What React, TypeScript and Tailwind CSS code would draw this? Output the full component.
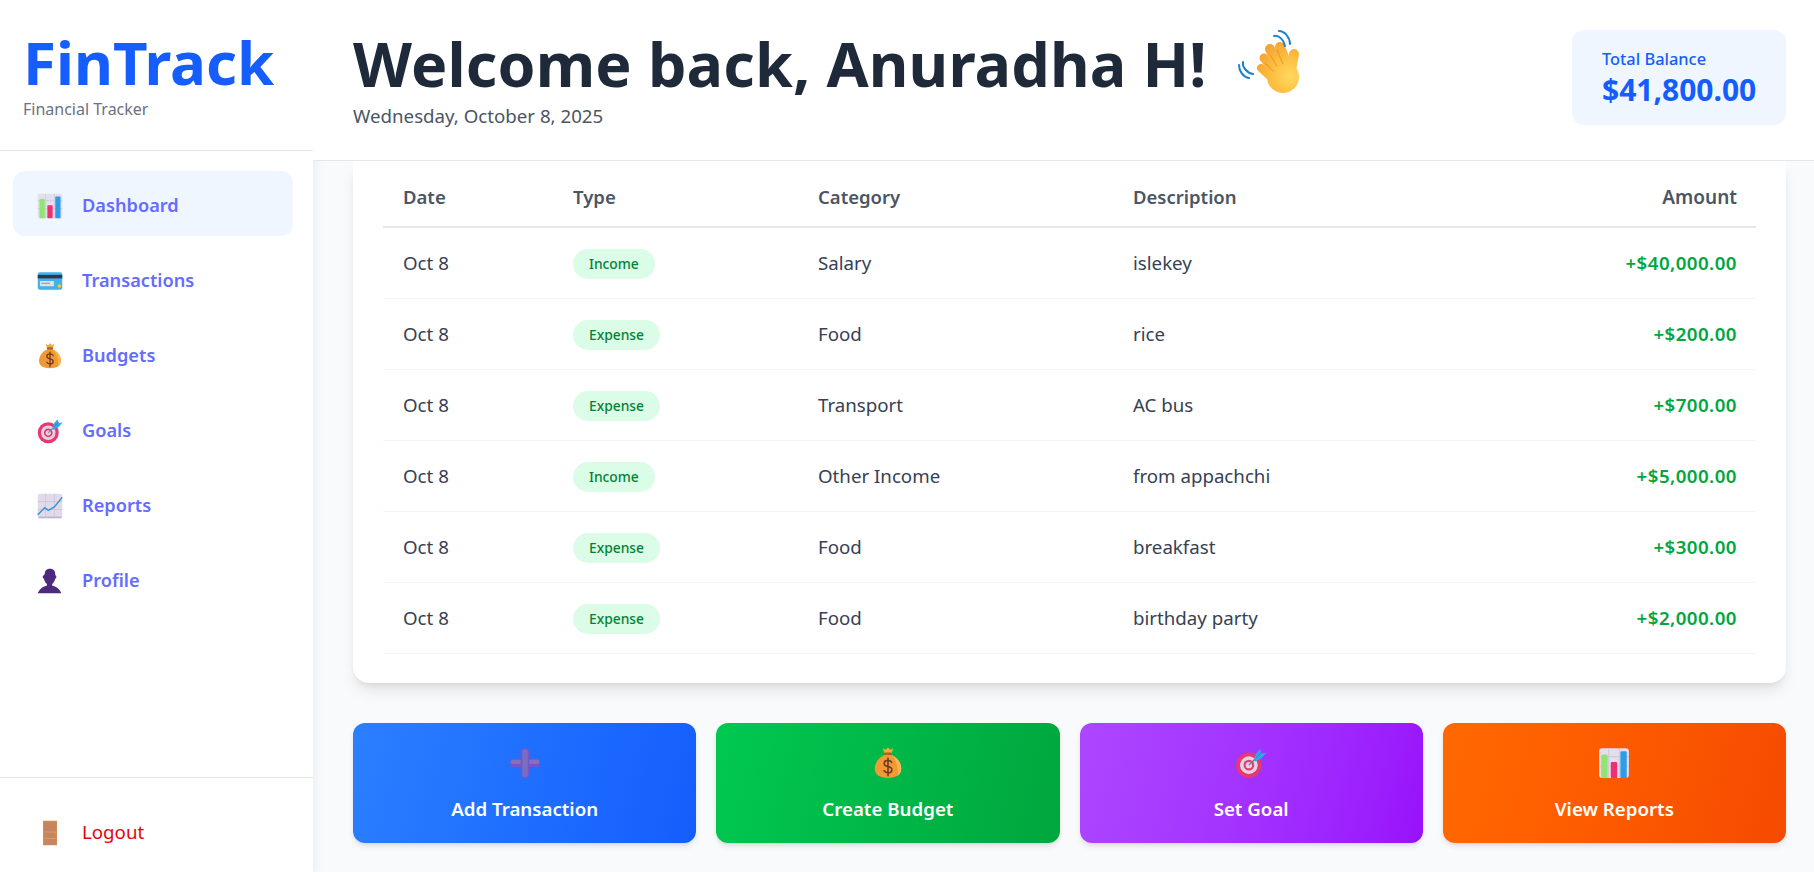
import type { ReactNode } from 'react'

function BarChartIcon({ size = 28 }: { size?: number }) {
  return (
    <svg width={size} height={size} viewBox="0 0 32 32">
      <rect x="2" y="2" width="28" height="28" rx="3" fill="#e4dfec" />
      <path d="M2 10h28M2 19h28M11 2v28M21 2v28" stroke="#d0c9da" strokeWidth="1" />
      <path d="M4 9.500a1.500 1.500 0 0 1 1.500-1.500h3a1.500 1.500 0 0 1 1.500 1.500V30H5a1 1 0 0 1-1-1z" fill="#8fe56f" />
      <rect x="13" y="15" width="6" height="15" rx="0.8" fill="#ee2f70" />
      <path d="M22 6a1 1 0 0 1 1-1h4a1 1 0 0 1 1 1v24h-6z" fill="#2e9ce9" />
    </svg>
  )
}

function CardIcon({ size = 28 }: { size?: number }) {
  return (
    <svg width={size} height={size} viewBox="0 0 32 32">
      <rect x="2" y="6" width="28" height="20" rx="2.500" fill="#3fb2e8" />
      <rect x="2" y="9" width="28" height="4" fill="#3a2f55" />
      <rect x="4.500" y="16" width="16" height="6" rx="0.5" fill="#d9e3ea" />
      <rect x="6" y="18" width="10" height="1.200" fill="#8c98a6" />
      <rect x="25" y="20" width="3.500" height="3.500" rx="1" fill="#fcc63c" />
    </svg>
  )
}

function MoneyBagIcon({ size = 28 }: { size?: number }) {
  return (
    <svg width={size} height={size} viewBox="0 0 32 32">
      <path d="M11 2l2.800 1.600L16 1.500l2.200 2.100L21 2l-1.700 5h-6.600z" fill="#f4a93a" />
      <rect x="12.500" y="6" width="7" height="3" rx="1" fill="#a8612a" />
      <path d="M12.500 8.500C7 11 3.500 16 3.500 21.500c0 6 5 8.500 12.500 8.500s12.500-2.500 12.500-8.500c0-5.500-3.500-10.500-9-13z" fill="#f09a35" />
      <path d="M19.500 8.500c5.500 2.500 9 7.500 9 13 0 3-1.300 5-3.500 6.400C26 20 23.500 13 19.500 8.500z" fill="#f9b650" />
      <path d="M19.500 15.500c-.7-1.300-2-2-3.500-2-2.100 0-3.600 1.100-3.600 2.900s1.500 2.500 3.600 2.900 3.600 1.200 3.600 3-1.500 2.900-3.600 2.900c-1.700 0-3-.7-3.700-2M16 11.500v16.500" fill="none" stroke="#6f3a23" strokeWidth="1.500" strokeLinecap="round" />
    </svg>
  )
}

function TargetIcon({ size = 28 }: { size?: number }) {
  return (
    <svg width={size} height={size} viewBox="0 0 32 32">
      <circle cx="14" cy="18" r="12" fill="#e6396f" />
      <circle cx="14" cy="18" r="8.300" fill="#e2d4e4" />
      <circle cx="14" cy="18" r="5" fill="#e6396f" />
      <circle cx="14" cy="18" r="3" fill="#e2d4e4" />
      <path d="M14 18L25 7" stroke="#7b6f86" strokeWidth="1.200" />
      <path d="M18.500 13.500l2-6 4-5 1.500 4.500L30.500 6 26 11.500l-6 3z" fill="#36a4ea" />
      <path d="M21 11l5-5" stroke="#1d7fc9" strokeWidth="0.800" />
    </svg>
  )
}

function ChartUpIcon({ size = 28 }: { size?: number }) {
  return (
    <svg width={size} height={size} viewBox="0 0 32 32">
      <rect x="2" y="2" width="28" height="28" rx="3" fill="#e1daea" />
      <path d="M3 29h26" stroke="#bfb2d0" strokeWidth="2" />
      <path d="M2 11h28M2 20h28M11 2v28M21 2v28" stroke="#cdc5d8" strokeWidth="1" />
      <path d="M2 26l8-8 4 3 7-4 9-11" fill="none" stroke="#3592da" strokeWidth="1.600" />
    </svg>
  )
}

function BustIcon({ size = 28 }: { size?: number }) {
  return (
    <svg width={size} height={size} viewBox="0 0 32 32">
      <path d="M10 8c0-4 2.500-6 6-6s6 2 6 6v1.500c1 .3 1.300 1.100 1.300 2s-.6 1.700-1.400 2c-.6 2.800-1.900 4.900-3.400 6V21c4 1 8.500 3.300 10.500 9H2c2-5.700 6.500-8 10.500-9v-1.500c-1.500-1.100-2.800-3.200-3.400-6-.8-.3-1.400-1.100-1.400-2s.3-1.700 1.300-2z" fill="#4d2a80" />
    </svg>
  )
}

function DoorIcon({ size = 28 }: { size?: number }) {
  return (
    <svg width={size} height={size} viewBox="0 0 32 32">
      <rect x="8" y="2" width="16" height="28" fill="#d18a56" />
      <rect x="9.500" y="4" width="13" height="10" fill="#c58562" />
      <rect x="9.500" y="15.500" width="13" height="6" fill="#c58562" />
      <rect x="9.500" y="23" width="13" height="6" fill="#c58562" />
      <rect x="9.500" y="14.500" width="13" height="0.800" fill="#e7a05e" />
      <rect x="9.500" y="22" width="13" height="0.800" fill="#e7a05e" />
      <circle cx="22.800" cy="16" r="0.800" fill="#f7a53a" />
    </svg>
  )
}

function PlusIcon({ size = 34 }: { size?: number }) {
  return (
    <svg width={size} height={size} viewBox="0 0 32 32">
      <rect x="2" y="12" width="28" height="8" rx="3" fill="#7a54c6" />
      <rect x="2.500" y="13" width="27" height="4" rx="2" fill="#7f72c4" />
      <rect x="12" y="2" width="8" height="28" rx="4" fill="#7a54c6" />
      <rect x="13.500" y="3" width="5" height="26" rx="2.500" fill="#7a6ec2" />
    </svg>
  )
}

function WaveIcon() {
  return (
    <svg width="66" height="66" viewBox="0 0 66 66">
      <defs>
        <radialGradient id="hand" gradientUnits="userSpaceOnUse" cx="54" cy="46" r="42">
          <stop offset="0" stopColor="#ffd95e" />
          <stop offset="0.5" stopColor="#fdbb3e" />
          <stop offset="1" stopColor="#f09c2d" />
        </radialGradient>
      </defs>
      <g stroke="url(#hand)" strokeLinecap="round" fill="none">
        <path d="M25 38L41 53" strokeWidth="8" />
        <path d="M28 28L44 48" strokeWidth="9" />
        <path d="M34 19L46 43" strokeWidth="10" />
        <path d="M44 17L53 40" strokeWidth="10" />
        <path d="M58 24L54 46" strokeWidth="10" />
      </g>
      <circle cx="47" cy="47" r="16" fill="url(#hand)" />
      <path d="M29 33l8 8M34 25l7 11M41 20l6 14" stroke="#d98a2a" strokeWidth="1.200" opacity="0.55" fill="none" strokeLinecap="round" />
      <g fill="none" stroke="#1b81c9" strokeWidth="2" strokeLinecap="round">
        <path d="M38 6c5-1 10 4 11 10" />
        <path d="M43 1c6 0 11 7 11 13" />
        <path d="M7 32c-1 5 4 11 10 12" />
        <path d="M3 35c0 6 4 12 10 13" />
      </g>
    </svg>
  )
}

function NavItem({ icon, label, active }: { icon: ReactNode; label: string; active?: boolean }) {
  return (
    <a className={`flex h-[65px] items-center gap-[18px] rounded-xl pt-1 pl-[23px] text-[18.2px] font-semibold text-[#646cff] ${active ? 'bg-blue-50' : ''}`} href="#">
      <span className="shrink-0">{icon}</span>
      {label}
    </a>
  )
}

const rows = [
  { type: 'Income', category: 'Salary', description: 'islekey', amount: '+$40,000.00' },
  { type: 'Expense', category: 'Food', description: 'rice', amount: '+$200.00' },
  { type: 'Expense', category: 'Transport', description: 'AC bus', amount: '+$700.00' },
  { type: 'Income', category: 'Other Income', description: 'from appachchi', amount: '+$5,000.00' },
  { type: 'Expense', category: 'Food', description: 'breakfast', amount: '+$300.00' },
  { type: 'Expense', category: 'Food', description: 'birthday party', amount: '+$2,000.00' },
]

function ActionButton({ icon, label, className }: { icon: ReactNode; label: string; className: string }) {
  return (
    <button className={`flex h-[120px] flex-col items-center justify-center gap-[15px] rounded-xl pt-[5px] font-semibold text-white shadow-md ${className}`}>
      {icon}
      <span className="text-[18.7px]">{label}</span>
    </button>
  )
}

export default function App() {
  return (
    <div className="flex h-screen overflow-hidden bg-gray-50 font-['Noto_Sans',sans-serif]">
      {/* Sidebar */}
      <aside className="relative z-10 flex w-[313px] shrink-0 flex-col bg-white shadow-lg">
        <div className="h-[151px] border-b border-gray-200 pt-7 pl-[23px]">
          <h1 className="text-[60px] leading-[68px] font-bold text-blue-600">FinTrack</h1>
          <p className="mt-[3px] text-[16px] leading-5 text-gray-500">Financial Tracker</p>
        </div>
        <nav className="flex flex-1 flex-col gap-2.5 pt-5 pr-5 pl-[13px]">
          <NavItem icon={<BarChartIcon />} label="Dashboard" active />
          <NavItem icon={<CardIcon />} label="Transactions" />
          <NavItem icon={<MoneyBagIcon />} label="Budgets" />
          <NavItem icon={<TargetIcon />} label="Goals" />
          <NavItem icon={<ChartUpIcon />} label="Reports" />
          <NavItem icon={<BustIcon />} label="Profile" />
        </nav>
        <div className="h-[95px] border-t border-gray-200 pt-[22px] pr-5 pl-[13px]">
          <a className="flex h-[65px] items-center gap-[18px] pl-[23px] text-[18.7px] text-red-600" href="#">
            <DoorIcon />
            Logout
          </a>
        </div>
      </aside>

      <div className="flex min-w-0 flex-1 flex-col">
        <header className="relative z-20 flex h-[161px] shrink-0 items-center justify-between border-b border-gray-200 bg-white pr-7 pb-[5px] pl-10">
          <div>
            <div className="flex items-center gap-[29px]">
              <h2 className="text-[61px] leading-[75px] font-bold tracking-[0.15px] text-gray-800">Welcome back, Anuradha H!</h2>
              <WaveIcon />
            </div>
            <p className="pt-px text-[18.7px] leading-7 text-gray-600">Wednesday, October 8, 2025</p>
          </div>
          <div className="flex h-[95px] w-[214px] flex-col justify-center rounded-xl bg-blue-50 px-[30px]">
            <span className="text-[16.4px] leading-6 font-medium text-blue-600">Total Balance</span>
            <span className="text-[30px] leading-[38px] font-bold text-blue-600">$41,800.00</span>
          </div>
        </header>

        <main className="flex-1 overflow-hidden pr-7 pl-10">
          <section className="rounded-b-2xl bg-white px-[30px] pb-[29px] shadow-lg">
            <table className="w-full table-fixed border-collapse text-left text-[18.7px] text-gray-700">
              <thead>
                <tr className="h-[66px] border-b-2 border-gray-200 text-[18.5px] text-gray-600">
                  <th className="w-[190px] pt-1.5 pl-5 font-semibold">Date</th>
                  <th className="w-[245px] pt-1.5 font-semibold">Type</th>
                  <th className="w-[315px] pt-1.5 font-semibold">Category</th>
                  <th className="w-[300px] pt-1.5 font-semibold">Description</th>
                  <th className="pt-2 pr-[19px] text-right text-[19px] font-semibold">Amount</th>
                </tr>
              </thead>
              <tbody>
                {rows.map((row, i) => (
                  <tr key={i} className="h-[71px] border-b border-gray-100">
                    <td className="pt-px pl-5">Oct 8</td>
                    <td className="pt-[2px]">
                      <span className="inline-block rounded-full bg-green-100 px-4 py-[4px] text-[13.8px] leading-[22px] font-medium text-green-700">{row.type}</span>
                    </td>
                    <td className="pt-px">{row.category}</td>
                    <td className="pt-px">{row.description}</td>
                    <td className="pt-px pr-[19px] text-right font-semibold tracking-[0.45px] text-green-600">{row.amount}</td>
                  </tr>
                ))}
              </tbody>
            </table>
          </section>

          <div className="mt-10 grid grid-cols-4 gap-5">
            <ActionButton icon={<PlusIcon />} label="Add Transaction" className="bg-linear-[105deg] from-blue-500 to-blue-600" />
            <ActionButton icon={<MoneyBagIcon size={34} />} label="Create Budget" className="bg-linear-[105deg] from-green-500 to-green-600" />
            <ActionButton icon={<TargetIcon size={34} />} label="Set Goal" className="bg-linear-[105deg] from-purple-500 to-purple-600" />
            <ActionButton icon={<BarChartIcon size={34} />} label="View Reports" className="bg-linear-[105deg] from-orange-500 to-orange-600" />
          </div>
        </main>
      </div>
    </div>
  )
}
